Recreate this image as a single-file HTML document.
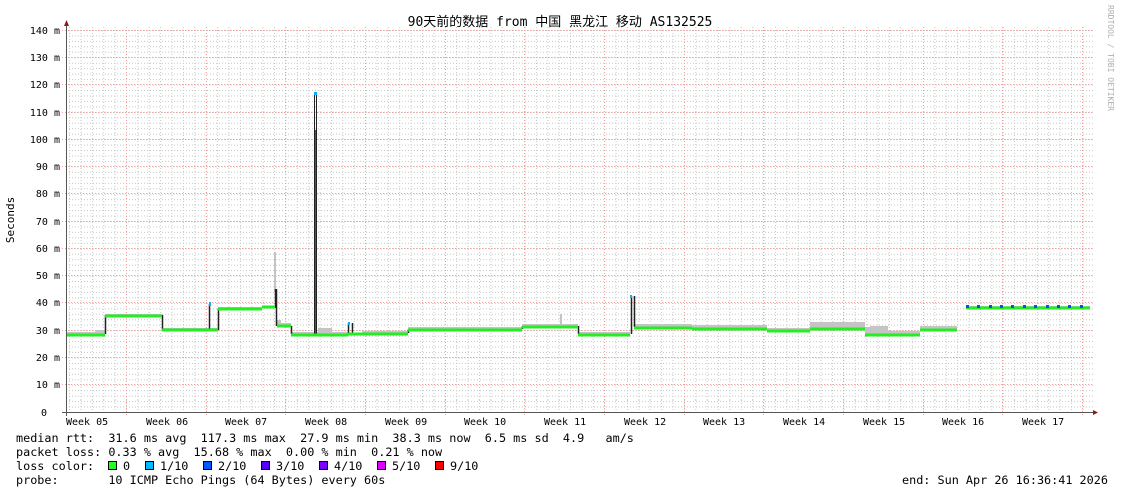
<!DOCTYPE html>
<html><head><meta charset="utf-8"><style>
html,body{margin:0;padding:0;background:#fff;}
svg{display:block;}
text{font-family:"DejaVu Sans Mono","Liberation Mono",monospace;white-space:pre;}
</style></head><body>
<svg width="1121" height="494" viewBox="0 0 1121 494" xmlns="http://www.w3.org/2000/svg">
<defs>
<pattern id="hg" x="0" y="412" width="1200" height="5.458" patternUnits="userSpaceOnUse">
<line x1="0" y1="0.5" x2="1200" y2="0.5" stroke="#c8c8c8" stroke-width="1" stroke-dasharray="1,2"/>
</pattern>
<pattern id="vg" x="126" y="0" width="11.386" height="400" patternUnits="userSpaceOnUse">
<line x1="0.5" y1="0" x2="0.5" y2="400" stroke="#c8c8c8" stroke-width="1" stroke-dasharray="1,2"/>
</pattern>
</defs>
<rect x="67" y="27" width="1026" height="385" fill="url(#hg)"/>
<rect x="67" y="27" width="1026" height="385" fill="url(#vg)"/>
<g stroke="#f2a0a0" stroke-width="1" stroke-dasharray="1,2">
<line x1="62" y1="30.5" x2="1093" y2="30.5"/><line x1="62" y1="57.5" x2="1093" y2="57.5"/>
<line x1="62" y1="84.5" x2="1093" y2="84.5"/><line x1="62" y1="112.5" x2="1093" y2="112.5"/>
<line x1="62" y1="139.5" x2="1093" y2="139.5"/><line x1="62" y1="166.5" x2="1093" y2="166.5"/>
<line x1="62" y1="193.5" x2="1093" y2="193.5"/><line x1="62" y1="221.5" x2="1093" y2="221.5"/>
<line x1="62" y1="248.5" x2="1093" y2="248.5"/><line x1="62" y1="275.5" x2="1093" y2="275.5"/>
<line x1="62" y1="302.5" x2="1093" y2="302.5"/><line x1="62" y1="330.5" x2="1093" y2="330.5"/>
<line x1="62" y1="357.5" x2="1093" y2="357.5"/><line x1="62" y1="384.5" x2="1093" y2="384.5"/>
<line x1="126.5" y1="27" x2="126.5" y2="416"/><line x1="206.5" y1="27" x2="206.5" y2="416"/>
<line x1="285.5" y1="27" x2="285.5" y2="416"/><line x1="365.5" y1="27" x2="365.5" y2="416"/>
<line x1="445.5" y1="27" x2="445.5" y2="416"/><line x1="524.5" y1="27" x2="524.5" y2="416"/>
<line x1="604.5" y1="27" x2="604.5" y2="416"/><line x1="684.5" y1="27" x2="684.5" y2="416"/>
<line x1="763.5" y1="27" x2="763.5" y2="416"/><line x1="843.5" y1="27" x2="843.5" y2="416"/>
<line x1="923.5" y1="27" x2="923.5" y2="416"/><line x1="1002.5" y1="27" x2="1002.5" y2="416"/>
<line x1="1082.5" y1="27" x2="1082.5" y2="416"/>
</g>
<g fill="#c4c4c4">
<rect x="67" y="332" width="38" height="2"/><rect x="95" y="330" width="10" height="3"/>
<rect x="105" y="314" width="57" height="1"/>
<rect x="162" y="328" width="56" height="2"/>
<rect x="218" y="307" width="44" height="1"/>
<rect x="274" y="252" width="2" height="40"/>
<rect x="277" y="320" width="4" height="6"/><rect x="281" y="323" width="10" height="3"/>
<rect x="291" y="332" width="57" height="2"/><rect x="318" y="328" width="14" height="6"/>
<rect x="362" y="331" width="46" height="2"/>
<rect x="408" y="327" width="114" height="2"/>
<rect x="522" y="324" width="56" height="2"/><rect x="560" y="314" width="2" height="10"/>
<rect x="578" y="332" width="52" height="2"/>
<rect x="634" y="324" width="58" height="3"/>
<rect x="692" y="325" width="75" height="3"/>
<rect x="767" y="328" width="43" height="2"/>
<rect x="810" y="322" width="55" height="6"/>
<rect x="865" y="327" width="5" height="7"/><rect x="870" y="326" width="18" height="8"/><rect x="888" y="331" width="32" height="3"/>
<rect x="920" y="326" width="37" height="3"/>
<rect x="966" y="306" width="124" height="2"/>
</g>
<g stroke="#222" stroke-width="1.5" fill="none">
<path d="M105.5 334V315M162.5 315V330M209.5 330V304M218.5 330V308M275.5 308V289M276.5 289V326M291.5 326V334M348.5 334V323M352.5 323V334M408.5 333V329M522.5 329V326M578.5 326V334M631.5 334V296M634.5 296V327"/>
<path d="M314.5 334V93M316.5 334V93" stroke-width="1"/>
<path d="M315.5 334V130" stroke="#555" stroke-width="1"/>
</g>
<g stroke="#22ee22" stroke-width="3" fill="none">
<path d="M67 335H105M105 316H162M162 330H218M218 309H262M262 307H275M277 326H291M291 335H348M348 334H362M362 334H408M408 330H522M522 327H578M578 335H630M634 328H692M692 329H767M767 331H810M810 329H865M865 335H920M920 330H957M966 308H1090"/>
</g>
<g fill="#0ab0ff"><rect x="314" y="92" width="3" height="3"/><rect x="209" y="302" width="2" height="4"/><rect x="348" y="322" width="2" height="3"/><rect x="630" y="295" width="2" height="3"/></g>
<g fill="#1050e0">
<rect x="966" y="305" width="3" height="3"/><rect x="977" y="305" width="3" height="3"/><rect x="989" y="305" width="3" height="3"/><rect x="1000" y="305" width="3" height="3"/><rect x="1011" y="305" width="3" height="3"/><rect x="1023" y="305" width="3" height="3"/><rect x="1034" y="305" width="3" height="3"/><rect x="1046" y="305" width="3" height="3"/><rect x="1057" y="305" width="3" height="3"/><rect x="1068" y="305" width="3" height="3"/><rect x="1080" y="305" width="3" height="3"/>
</g>
<line x1="66.5" y1="25" x2="66.5" y2="416" stroke="#555" stroke-width="1"/>
<line x1="62" y1="412.5" x2="1093" y2="412.5" stroke="#555" stroke-width="1"/>
<path d="M64 26L66.5 20L69 26Z" fill="#8b1a1a"/>
<path d="M1093 410L1098 412.5L1093 415Z" fill="#8b1a1a"/>
<g font-size="10" fill="#000" text-anchor="end">
<text x="60" y="34">140 m</text><text x="60" y="61">130 m</text><text x="60" y="88">120 m</text>
<text x="60" y="116">110 m</text><text x="60" y="143">100 m</text><text x="60" y="170">90 m</text>
<text x="60" y="197">80 m</text><text x="60" y="225">70 m</text><text x="60" y="252">60 m</text>
<text x="60" y="279">50 m</text><text x="60" y="306">40 m</text><text x="60" y="334">30 m</text>
<text x="60" y="361">20 m</text><text x="60" y="388">10 m</text><text x="47" y="416">0</text>
</g>
<g font-size="10" fill="#000">
<text x="66" y="425">Week 05</text><text x="146" y="425">Week 06</text><text x="225" y="425">Week 07</text>
<text x="305" y="425">Week 08</text><text x="385" y="425">Week 09</text><text x="464" y="425">Week 10</text>
<text x="544" y="425">Week 11</text><text x="624" y="425">Week 12</text><text x="703" y="425">Week 13</text>
<text x="783" y="425">Week 14</text><text x="863" y="425">Week 15</text><text x="942" y="425">Week 16</text>
<text x="1022" y="425">Week 17</text>
</g>
<text x="14" y="220" font-size="11" transform="rotate(-90 14 220)" text-anchor="middle">Seconds</text>
<text x="1108" y="5" font-size="8" fill="#b0b0b0" transform="rotate(90 1108 5)">RRDTOOL / TOBI OETIKER</text>
<text x="560" y="26" font-size="13" text-anchor="middle" style='font-family:"DejaVu Sans Mono","Noto Sans CJK SC",monospace'>90天前的数据 from 中国 黑龙江 移动 AS132525</text>
<g font-size="11.8" fill="#000">
<text x="16" y="442">median rtt:  31.6 ms avg  117.3 ms max  27.9 ms min  38.3 ms now  6.5 ms sd  4.9   am/s</text>
<text x="16" y="456">packet loss: 0.33 % avg  15.68 % max  0.00 % min  0.21 % now</text>
<text x="16" y="470">loss color:</text>
<text x="16" y="484">probe:       10 ICMP Echo Pings (64 Bytes) every 60s</text>
<text x="902" y="484">end: Sun Apr 26 16:36:41 2026</text>
<text x="123" y="470">0</text><text x="160" y="470">1/10</text><text x="218" y="470">2/10</text>
<text x="276" y="470">3/10</text><text x="334" y="470">4/10</text><text x="392" y="470">5/10</text><text x="450" y="470">9/10</text>
</g>
<g stroke="#000" stroke-width="1">
<rect x="108.5" y="461.5" width="8" height="8" fill="#22ff22"/>
<rect x="145.5" y="461.5" width="8" height="8" fill="#00b8ff"/>
<rect x="203.5" y="461.5" width="8" height="8" fill="#0059ff"/>
<rect x="261.5" y="461.5" width="8" height="8" fill="#5500ff"/>
<rect x="319.5" y="461.5" width="8" height="8" fill="#7e00ff"/>
<rect x="377.5" y="461.5" width="8" height="8" fill="#dd00ff"/>
<rect x="435.5" y="461.5" width="8" height="8" fill="#ff0000"/>
</g>
</svg>
</body></html>
